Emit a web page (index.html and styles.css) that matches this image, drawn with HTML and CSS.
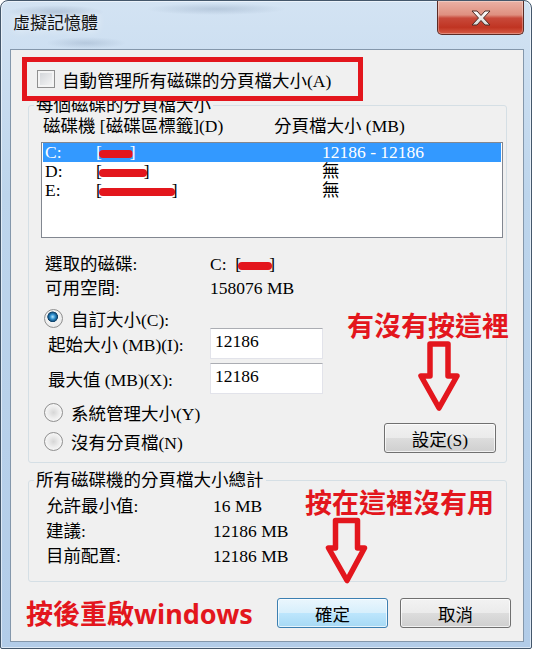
FILE: index.html
```html
<!DOCTYPE html>
<html lang="zh-Hant">
<head>
    <meta charset="UTF-8">
    <meta name="viewport" content="width=device-width, initial-scale=1.0">
    <title>虛擬記憶體</title>
    <link rel="stylesheet" href="styles.css">
</head>
<body>
    <div class="window">
        <div class="titlebar">
            <span class="title">虛擬記憶體</span>
            <button class="close-btn" aria-label="關閉">
                <svg width="20" height="16" viewBox="0 0 20 16">
                    <defs>
                        <linearGradient id="xg" x1="0" y1="0" x2="0" y2="1">
                            <stop offset="0" stop-color="#ffffff"/>
                            <stop offset="1" stop-color="#d8d8d8"/>
                        </linearGradient>
                    </defs>
                    <polygon points="1,1 6,1 10,5.5 14,1 19,1 12.5,8 19,15 14,15 10,10.5 6,15 1,15 7.5,8"
                             fill="url(#xg)" stroke="#4b2a25" stroke-width="1" stroke-linejoin="round"/>
                </svg>
            </button>
        </div>

        <div class="client">
            <label class="auto-box">
                <span class="checkbox"></span>
                <span>自動管理所有磁碟的分頁檔大小(A)</span>
            </label>

            <fieldset class="group group-drives">
                <legend>每個磁碟的分頁檔大小</legend>
                <div class="list-head">
                    <span>磁碟機 [磁碟區標籤](D)</span>
                    <span>分頁檔大小 (MB)</span>
                </div>
                <div class="drive-list">
                    <div class="drive-row selected">
                        <span>C:</span>
                        <span>[<span class="redact" style="width: 34px"></span>]</span>
                        <span>12186 - 12186</span>
                    </div>
                    <div class="drive-row">
                        <span>D:</span>
                        <span>[<span class="redact" style="width: 48px"></span>]</span>
                        <span>無</span>
                    </div>
                    <div class="drive-row">
                        <span>E:</span>
                        <span>[<span class="redact" style="width: 76px"></span>]</span>
                        <span>無</span>
                    </div>
                </div>

                <div class="info-grid">
                    <span>選取的磁碟:</span>
                    <span>C: &nbsp;[<span class="redact" style="width: 34px"></span>]</span>
                    <span>可用空間:</span>
                    <span>158076 MB</span>
                </div>

                <div class="size-area">
                    <div class="size-options">
                        <div class="radio-row first"><span class="radio checked"></span>自訂大小(C):</div>
                        <div class="field-row"><span class="field-label">起始大小 (MB)(I):</span><span class="textbox">12186</span></div>
                        <div class="field-row second"><span class="field-label">最大值 (MB)(X):</span><span class="textbox">12186</span></div>
                        <div class="radio-row"><span class="radio"></span>系統管理大小(Y)</div>
                        <div class="radio-row"><span class="radio"></span>沒有分頁檔(N)</div>
                    </div>
                    <button class="btn set-btn">設定(S)</button>
                </div>
            </fieldset>

            <fieldset class="group group-total">
                <legend>所有磁碟機的分頁檔大小總計</legend>
                <div class="total-grid">
                    <span>允許最小值:</span><span>16 MB</span>
                    <span>建議:</span><span>12186 MB</span>
                    <span>目前配置:</span><span>12186 MB</span>
                </div>
            </fieldset>

            <div class="footer">
                <span class="note note-restart">按後重啟windows</span>
                <button class="btn default">確定</button>
                <button class="btn">取消</button>
            </div>
        </div>

        <!-- red annotations drawn over the dialog -->
        <div class="note note-set">有沒有按這裡</div>
        <svg class="arrow arrow-set" width="48" height="76" viewBox="0 0 48 76">
            <polygon points="15,4 33,4 33,36 42,36 24,68 6,36 15,36"/>
        </svg>
        <div class="note note-ok">按在這裡沒有用</div>
        <svg class="arrow arrow-ok" width="48" height="72" viewBox="0 0 48 72">
            <polygon points="12.5,5.5 34.5,5.5 34.5,33 41.5,33 24,65.5 5.5,33 12.5,33"/>
        </svg>
    </div>
</body>
</html>
```

FILE: styles.css
```css
* {
    box-sizing: border-box;
}

body {
    margin: 0;
    background: #fff;
    color: #000;
    font-family: "Liberation Serif", "Noto Sans CJK TC", serif;
    font-size: 17.5px;
}

.window {
    position: relative;
    width: 532px;
    height: 649px;
    display: flex;
    flex-direction: column;
    padding: 0 7px 6px 9px;
    border: 1px solid #44576b;
    border-radius: 8px 8px 2px 2px;
    background:
        radial-gradient(ellipse 48px 7px at 55px 11px, rgba(70, 95, 130, .25), transparent),
        radial-gradient(ellipse 70px 6px at 215px 8px, rgba(70, 95, 130, .2), transparent),
        radial-gradient(ellipse 40px 6px at 85px 42px, rgba(70, 95, 130, .18), transparent),
        linear-gradient(180deg, #d3e3f3 0%, #bdd5ec 30%, #b2cce8 100%);
    box-shadow: inset 0 0 0 1px rgba(255, 255, 255, .55);
}

.titlebar {
    height: 48px;
    display: flex;
    justify-content: space-between;
    align-items: flex-start;
}

.title {
    margin: 9px 0 0 3px;
    font-family: "Noto Sans CJK TC", sans-serif;
    font-size: 17px;
    line-height: 24px;
    color: #111;
    text-shadow: 0 0 8px rgba(255, 255, 255, .9);
}

.close-btn {
    width: 87px;
    height: 34px;
    padding: 0;
    display: flex;
    align-items: center;
    justify-content: center;
    border: 1px solid #5c2b25;
    border-top: 0;
    border-radius: 0 0 5px 5px;
    background: linear-gradient(180deg, #eab1a5 0%, #df9080 42%, #c8493a 52%, #c03422 80%, #d65b45 100%);
    box-shadow: inset 0 0 0 1px rgba(255, 255, 255, .3);
}

.client {
    flex: 1;
    display: flex;
    flex-direction: column;
    background: #f0f0f0;
    border: 1px solid #8497ab;
}

/* checkbox row inside the red marking */
.auto-box {
    position: relative;
    z-index: 1;
    display: flex;
    align-items: center;
    gap: 7px;
    width: fit-content;
    height: 44px;
    margin: 7px 0 0 11px;
    padding: 0 27px 0 10px;
    border: 5px solid #e3161d;
}

.checkbox {
    width: 18px;
    height: 18px;
    border: 1px solid #8f8f8f;
    background: linear-gradient(135deg, #cfd2d6, #f8f8f8);
    box-shadow: inset 0 0 0 2px #f4f4f4;
}

.group {
    margin: 0;
    padding: 0;
    min-width: 0;
    border: 1px solid #d5dfe5;
    border-radius: 3px;
}

.group legend {
    margin-left: 5px;
    padding: 0 2px;
    line-height: 20px;
}

.group-drives {
    margin: -6px 0 0 17px;
    width: 479px;
    padding-bottom: 9px;
}

.list-head {
    display: flex;
    margin-top: 1px;
    padding-left: 14px;
    line-height: 20px;
}

.list-head span:first-child {
    width: 231px;
}

.drive-list {
    margin: 6px 0 0 12px;
    width: 462px;
    height: 96px;
    padding: 0 1px;
    background: #fff;
    border: 1px solid #828790;
}

.drive-row {
    display: grid;
    grid-template-columns: 51px 226px 1fr;
    height: 19px;
    line-height: 19px;
    padding-left: 2px;
}

.drive-row.selected {
    background: #3399ff;
    color: #fff;
}

.redact {
    display: inline-block;
    height: 8px;
    margin: 0 -3px;
    border-radius: 4px;
    background: #e3161d;
    vertical-align: middle;
}

.info-grid {
    display: grid;
    grid-template-columns: 165px 1fr;
    margin: 14px 0 0 16px;
    line-height: 24px;
}

.size-area {
    display: flex;
    justify-content: space-between;
    align-items: flex-end;
    padding: 0 10px 0 15px;
}

.size-options {
    display: flex;
    flex-direction: column;
}

.radio-row {
    display: flex;
    align-items: center;
    gap: 8px;
    height: 24px;
    margin-top: 5px;
}

.radio-row.first {
    height: 20px;
    margin-top: 8px;
}

.field-row + .radio-row {
    margin-top: 6px;
}

.radio {
    width: 19px;
    height: 19px;
    border-radius: 50%;
    border: 1px solid #8f8f8f;
    background: radial-gradient(circle at 50% 50%, #d6d6d6 0, #ebebeb 5px, #f8f8f8 9px);
}

.radio.checked {
    background: radial-gradient(circle at 45% 40%, #b4e8ff 0, #2e8fcf 2.5px, #0d3f66 5px, #f3f3f3 5.6px, #e4e4e4 100%);
}

.field-row {
    display: flex;
    align-items: center;
    height: 31px;
    padding-left: 4px;
}

.field-row.second {
    margin-top: 4px;
}

.field-label {
    width: 162px;
}

.textbox {
    width: 113px;
    height: 31px;
    padding: 2px 4px 0;
    line-height: 20px;
    background: #fff;
    border: 1px solid #e2e3ea;
    border-top-color: #abadb3;
}

.btn {
    width: 111px;
    height: 30px;
    padding: 0;
    font: inherit;
    color: #000;
    border: 1px solid #707070;
    border-radius: 3px;
    background: linear-gradient(180deg, #f2f2f2 0%, #ebebeb 49%, #dddddd 50%, #cfcfcf 100%);
    box-shadow: inset 0 0 0 1px rgba(255, 255, 255, .7);
}

.btn.default {
    border-color: #3c7fb1;
    background: linear-gradient(180deg, #eaf6fd 0%, #d7effc 49%, #bde6fd 50%, #a6d9f4 100%);
}

.set-btn {
    width: 112px;
}

.group-total {
    margin: 7px 0 0 17px;
    width: 479px;
    padding-bottom: 12px;
}

.total-grid {
    display: grid;
    grid-template-columns: 167px 1fr;
    margin: 4px 0 0 17px;
    line-height: 25px;
}

.footer {
    display: flex;
    align-items: center;
    gap: 12px;
    height: 30px;
    margin-top: 16px;
    padding: 0 12px 0 15px;
}

.note {
    font-family: "Noto Sans", "Noto Sans CJK TC", sans-serif;
    font-weight: bold;
    font-size: 27px;
    line-height: 27px;
    color: #e3161d;
    white-space: nowrap;
}

.note-restart {
    margin-right: auto;
}

.note-set {
    position: absolute;
    left: 346px;
    top: 311px;
}

.note-ok {
    position: absolute;
    left: 304px;
    top: 488px;
}

.arrow {
    position: absolute;
    fill: none;
    stroke: #e3161d;
    stroke-width: 5.5;
    stroke-linejoin: round;
}

.arrow-set {
    left: 414px;
    top: 339px;
}

.arrow-ok {
    left: 322px;
    top: 514px;
}
```
